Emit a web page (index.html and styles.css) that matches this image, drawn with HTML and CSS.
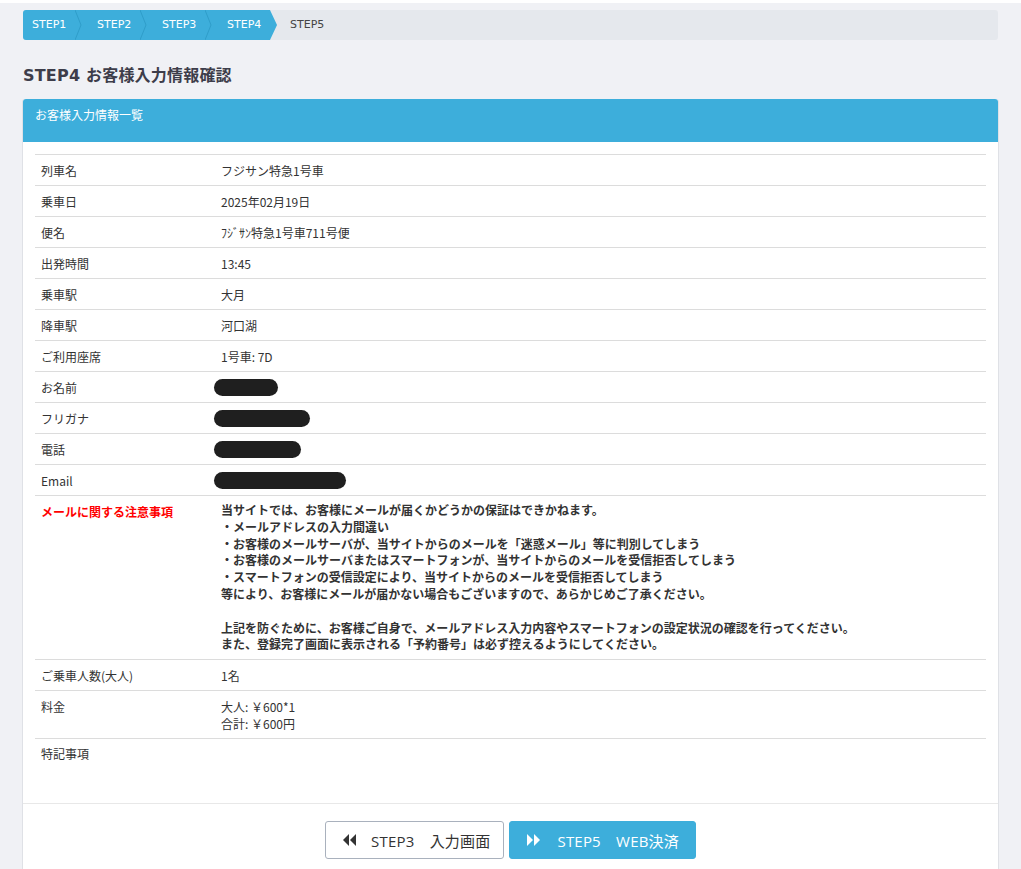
FILE: index.html
```html
<!DOCTYPE html>
<html lang="ja">
<head>
    <meta charset="UTF-8">
    <title>STEP4 お客様入力情報確認</title>
    <link rel="stylesheet" href="styles.css">
</head>
<body>
    <div class="page">
        <div class="crumbs">
            <div class="crumbDone">
                <span class="step first">STEP1</span>
                <svg class="sep" width="7" height="30"><polyline points="0,0 6,15 0,30" fill="none" stroke="#2f9dc9" stroke-width="1"/></svg>
                <span class="step">STEP2</span>
                <svg class="sep" width="7" height="30"><polyline points="0,0 6,15 0,30" fill="none" stroke="#2f9dc9" stroke-width="1"/></svg>
                <span class="step">STEP3</span>
                <svg class="sep" width="7" height="30"><polyline points="0,0 6,15 0,30" fill="none" stroke="#2f9dc9" stroke-width="1"/></svg>
                <span class="step">STEP4</span>
            </div>
            <svg class="tip" width="8" height="30"><polygon points="0,0 7,15 0,30" fill="#3daedb"/></svg>
            <span class="step current">STEP5</span>
        </div>

        <h1 class="pageTitle">STEP4 お客様入力情報確認</h1>

        <div class="card">
            <div class="cardHead">お客様入力情報一覧</div>
            <div class="cardBody">
                <table class="infoTable">
                    <tr><th>列車名</th><td>フジサン特急1号車</td></tr>
                    <tr><th>乗車日</th><td>2025年02月19日</td></tr>
                    <tr><th>便名</th><td>ﾌｼﾞｻﾝ特急1号車711号便</td></tr>
                    <tr><th>出発時間</th><td>13:45</td></tr>
                    <tr><th>乗車駅</th><td>大月</td></tr>
                    <tr><th>降車駅</th><td>河口湖</td></tr>
                    <tr><th>ご利用座席</th><td>1号車: 7D</td></tr>
                    <tr><th>お名前</th><td><span class="blot" style="width:64px"></span></td></tr>
                    <tr><th>フリガナ</th><td><span class="blot" style="width:96px"></span></td></tr>
                    <tr><th>電話</th><td><span class="blot" style="width:87px"></span></td></tr>
                    <tr><th>Email</th><td><span class="blot" style="width:132px"></span></td></tr>
                    <tr class="notice">
                        <th>メールに関する注意事項</th>
                        <td>
                            当サイトでは、お客様にメールが届くかどうかの保証はできかねます。<br>
                            ・メールアドレスの入力間違い<br>
                            ・お客様のメールサーバが、当サイトからのメールを「迷惑メール」等に判別してしまう<br>
                            ・お客様のメールサーバまたはスマートフォンが、当サイトからのメールを受信拒否してしまう<br>
                            ・スマートフォンの受信設定により、当サイトからのメールを受信拒否してしまう<br>
                            等により、お客様にメールが届かない場合もございますので、あらかじめご了承ください。<br>
                            <br>
                            上記を防ぐために、お客様ご自身で、メールアドレス入力内容やスマートフォンの設定状況の確認を行ってください。<br>
                            また、登録完了画面に表示される「予約番号」は必ず控えるようにしてください。
                        </td>
                    </tr>
                    <tr><th>ご乗車人数(大人)</th><td>1名</td></tr>
                    <tr><th>料金</th><td>大人: ￥600*1<br>合計: ￥600円</td></tr>
                    <tr class="last"><th>特記事項</th><td></td></tr>
                </table>
            </div>
            <div class="cardFoot">
                <a class="btn btnBack" href="#">
                    <svg width="13" height="12" viewBox="0 0 13 12"><polygon points="6,0 0,6 6,12" fill="#333"/><polygon points="13,0 7,6 13,12" fill="#333"/></svg>
                    <span>STEP3　入力画面</span>
                </a>
                <a class="btn btnNext" href="#">
                    <svg width="13" height="12" viewBox="0 0 13 12"><polygon points="0,0 6,6 0,12" fill="#fff"/><polygon points="7,0 13,6 7,12" fill="#fff"/></svg>
                    <span>STEP5　WEB決済</span>
                </a>
            </div>
        </div>
    </div>
</body>
</html>
```

FILE: styles.css
```css
/* page */
body {
    margin: 0;
    background: #f0f1f5;
    border-top: 3px solid #fff;
    font-family: "Open Sans", "Noto Sans CJK JP", sans-serif;
    color: #333;
}

.page {
    padding: 7px 23px 0;
}

/* step breadcrumb */
.crumbs {
    display: flex;
    align-items: center;
    height: 30px;
    background: #e5e8ed;
    border-radius: 3px;
    font-family: "DejaVu Sans", "Noto Sans CJK JP", sans-serif;
    font-size: 11px;
}

.crumbDone {
    display: flex;
    align-items: center;
    height: 30px;
    background: #3daedb;
    border-radius: 3px 0 0 3px;
    color: #fff;
}

.step {
    display: block;
    width: 43px;
    padding-left: 15px;
    line-height: 30px;
}

.step.first {
    width: 43px;
    padding-left: 9px;
}

.step.current {
    color: #444;
    padding-left: 12px;
}

.sep, .tip {
    display: block;
    flex: none;
}

/* title */
.pageTitle {
    margin: 24px 0 11px;
    font-size: 16px;
    line-height: 24px;
    font-weight: bold;
    color: #3d3d4a;
    font-family: "DejaVu Sans", "Noto Sans CJK JP", sans-serif;
    letter-spacing: 0.2px;
}

/* card */
.card {
    background: #fff;
    border-left: 1px solid #dfe1e6;
    border-right: 1px solid #dfe1e6;
    margin-left: -1px;
    margin-right: -1px;
    border-radius: 3px 3px 0 0;
}

.cardHead {
    height: 43px;
    box-sizing: border-box;
    padding: 7px 12px 0;
    background: #3daedb;
    color: #fff;
    font-family: "Noto Sans CJK JP", sans-serif;
    font-size: 12px;
    line-height: 17px;
    border-radius: 3px 3px 0 0;
}

.cardBody {
    padding: 12px 12px 35px;
}

.infoTable {
    width: 100%;
    border-collapse: collapse;
    font-family: "Noto Sans CJK JP", sans-serif;
    font-size: 12px;
    line-height: 17px;
    color: #333;
}

.infoTable th, .infoTable td {
    text-align: left;
    vertical-align: top;
    font-weight: normal;
    padding: 7px 6px 6px;
    border-top: 1px solid #dcdcdc;
}

.infoTable th {
    width: 168px;
}

.infoTable tr.last th, .infoTable tr.last td {
    padding-top: 6px;
}

.notice th {
    color: #f00;
    font-weight: bold;
}

.notice td {
    font-weight: bold;
    line-height: 16.8px;
    padding-top: 6px;
}

.blot {
    display: block;
    height: 17px;
    margin-left: -7px;
    background: #1f1f1f;
    border-radius: 9px;
}

/* footer buttons */
.cardFoot {
    display: flex;
    justify-content: center;
    gap: 5px;
    padding: 17px 0 20px;
    border-top: 1px solid #e8e8e8;
}

.btn {
    display: flex;
    align-items: center;
    gap: 15px;
    height: 38px;
    box-sizing: border-box;
    padding: 0 13px 0 17px;
    border-radius: 3px;
    font-size: 15px;
    letter-spacing: 0.2px;
    text-decoration: none;
}

.btnBack {
    border: 1px solid #a9b1bd;
    background: #fff;
    color: #333;
}

.btnNext {
    border: 1px solid #3daedb;
    background: #3daedb;
    color: #fff;
    padding-right: 16px;
    gap: 17px;
}
```
